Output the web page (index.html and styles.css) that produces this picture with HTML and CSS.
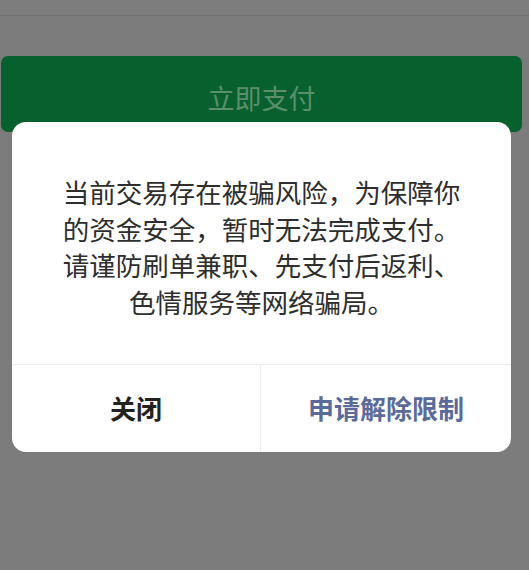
FILE: index.html
```html
<!DOCTYPE html>
<html lang="zh-CN">
<head>
<meta charset="utf-8">
<title>支付</title>
<link rel="stylesheet" href="styles.css">
</head>
<body>
<div class="page">
  <div class="topbar"></div>
  <div class="paybtn">立即支付</div>
</div>
<div class="dialog">
  <div class="msg">当前交易存在被骗风险，为保障你<br>的资金安全，暂时无法完成支付。<br>请谨防刷单兼职、先支付后返利、<br>色情服务等网络骗局。</div>
  <div class="actions">
    <div class="act close">关闭</div>
    <div class="act apply">申请解除限制</div>
  </div>
</div>
</body>
</html>
```
FILE: styles.css
```css
html, body {
  margin: 0;
  padding: 0;
  background: #7b7b7b;
  width: 529px;
  height: 570px;
  overflow: hidden;
  font-family: "Noto Sans CJK SC", "Noto Sans", sans-serif;
}
.page {
  display: flex;
  flex-direction: column;
}
.topbar {
  height: 15px;
  border-bottom: 1px solid #727272;
  background: #7d7d7d;
}
.paybtn {
  margin: 40px 7px 0 1px;
  height: 76px;
  box-sizing: border-box;
  padding-top: 22px;
  background: #07612f;
  border-radius: 7px;
  color: #5b8e69;
  font-size: 27px;
  line-height: 40px;
  text-align: center;
  letter-spacing: 0;
}
.dialog {
  position: absolute;
  left: 12px;
  top: 122px;
  width: 499px;
  height: 330px;
  background: #fff;
  border-radius: 14px;
  display: flex;
  flex-direction: column;
  overflow: hidden;
}
.msg {
  padding: 52px 0 0;
  height: 243px;
  box-sizing: border-box;
  border-bottom: 1px solid #ececec;
  text-align: center;
  font-size: 26.5px;
  line-height: 36.5px;
  color: #2e2e2e;
}
.actions {
  flex: 1;
  display: grid;
  grid-template-columns: 249px 1fr;
}
.act {
  display: flex;
  align-items: center;
  justify-content: center;
  font-size: 26px;
  font-weight: bold;
  padding-bottom: 3px;
}
.close {
  color: #222;
  border-right: 1px solid #ececec;
}
.apply {
  color: #5a6a9a;
}
```
